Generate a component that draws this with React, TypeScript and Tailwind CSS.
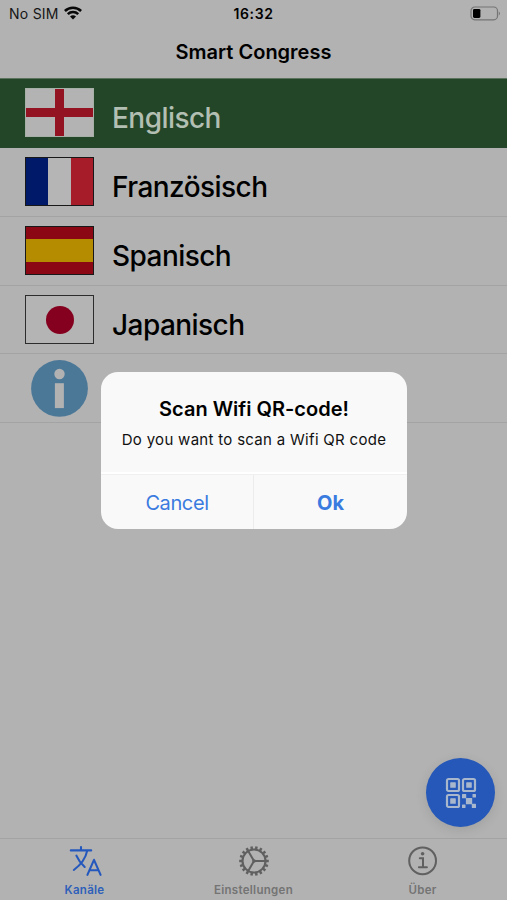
import type { ReactNode } from "react";

const channels = [
  { name: "Englisch", flag: <EnglandFlag />, active: true, height: "h-[69px]" },
  { name: "Französisch", flag: <FranceFlag />, height: "h-[69px]" },
  { name: "Spanisch", flag: <SpainFlag />, height: "h-[69px]" },
  { name: "Japanisch", flag: <JapanFlag />, height: "h-[68px]" },
];

function EnglandFlag() {
  return (
    <div className="relative h-[49px] w-[69px] border border-[#a6b0a7] bg-[#b3b3b3]">
      <div className="absolute inset-y-0 left-[29px] w-[9px] bg-[#931322]" />
      <div className="absolute inset-x-0 top-[19px] h-[9px] bg-[#931322]" />
    </div>
  );
}

function FranceFlag() {
  return (
    <div className="grid h-[49px] w-[69px] grid-cols-3 border border-[#181818]">
      <div className="bg-[#001969]" />
      <div className="bg-[#b5b5b5]" />
      <div className="bg-[#a61c29]" />
    </div>
  );
}

function SpainFlag() {
  return (
    <div className="flex h-[49px] w-[69px] flex-col border border-[#181818] bg-[#8c0714]">
      <div className="mt-[12px] h-[23px] bg-[#b58b00]" />
    </div>
  );
}

function JapanFlag() {
  return (
    <div className="flex h-[49px] w-[69px] items-center justify-center border border-[#2c2c2c] bg-[#b4b4b4]">
      <div className="h-[28px] w-[28px] rounded-full bg-[#85001f]" />
    </div>
  );
}

function WifiIcon() {
  return (
    <svg className="-mt-[2px] ml-[5px] h-[14px] w-[18px]" viewBox="0 0 18 14" fill="none" stroke="#080808" strokeWidth="2.5">
      <path d="M.9 5a11.5 11.5 0 0 1 16.2 0" />
      <path d="M3.8 8.2a7.4 7.4 0 0 1 10.4 0" />
      <path d="M9 13.6 6 10.6a4.3 4.3 0 0 1 6 0Z" fill="#080808" stroke="none" />
    </svg>
  );
}

function BatteryIcon() {
  return (
    <svg className="h-[15px] w-[31px]" viewBox="0 0 31 15" fill="none">
      <rect x="1" y="1" width="26.5" height="12.8" rx="3.8" stroke="#747474" strokeWidth="1.2" />
      <path d="M28.8 5.4v4a2.4 2.4 0 0 0 0-4Z" fill="#747474" />
      <rect x="3" y="2.9" width="7.4" height="9" rx="1.4" fill="#000" />
    </svg>
  );
}

function LanguageIcon() {
  return (
    <svg className="h-[34px] w-[34px]" viewBox="0 0 34 34" fill="none" stroke="#2558bd" strokeWidth="2.1" strokeLinecap="round" strokeLinejoin="round">
      <path d="M2.8 6.4h20.4M13 3v3.4M19.3 6.4C17.6 14.5 12 21.5 5.8 26M8.4 11.6c2 4.6 4.7 8.2 8.3 11.4" />
      <path d="m19.4 30.8 6.6-15 6.6 15M21.6 26.3h8.8" />
    </svg>
  );
}

function CogIcon() {
  return (
    <svg className="h-[32px] w-[32px]" viewBox="0 0 32 32" fill="none" stroke="#606060">
      <circle cx="16" cy="16" r="11.5" strokeWidth="2.1" />
      <g strokeWidth="2.5">
        {Array.from({ length: 18 }, (_, i) => (
          <path key={i} d="M16 4.5V1.2" transform={`rotate(${i * 20 + 10} 16 16)`} />
        ))}
      </g>
      <path d="M16 16h11.5M16 16 10.2 6M16 16l-5.8 10" strokeWidth="2" />
      <circle cx="16" cy="16" r="1.8" fill="#606060" stroke="none" />
    </svg>
  );
}

function AboutIcon() {
  return (
    <svg className="h-[32px] w-[32px]" viewBox="0 0 32 32" fill="none" stroke="#606060" strokeWidth="2">
      <circle cx="15.6" cy="15.8" r="13.4" />
      <path d="M12.8 13.3h3.2v8.8M11.9 22.3h8" strokeLinecap="round" />
      <circle cx="15.6" cy="8.7" r="1.8" fill="#606060" stroke="none" />
    </svg>
  );
}

function QrIcon() {
  return (
    <svg className="h-[32px] w-[32px]" viewBox="0 0 32 32" fill="#a9b7cd">
      <g fill="none" stroke="#a9b7cd" strokeWidth="2.2">
        <rect x="2" y="2" width="12" height="12" rx="1.5" />
        <rect x="18" y="2" width="12" height="12" rx="1.5" />
        <rect x="2" y="18" width="12" height="12" rx="1.5" />
      </g>
      <rect x="5.2" y="5.2" width="5.6" height="5.6" rx=".6" />
      <rect x="21.2" y="5.2" width="5.6" height="5.6" rx=".6" />
      <rect x="5.2" y="21.2" width="5.6" height="5.6" rx=".6" />
      <rect x="17" y="17" width="4.2" height="4.2" rx=".5" />
      <rect x="27.5" y="17" width="3.5" height="3.5" rx=".5" />
      <rect x="20.9" y="20.9" width="6.3" height="6.3" rx=".5" />
      <rect x="17" y="27.5" width="3.5" height="3.5" rx=".5" />
      <rect x="26.8" y="26.8" width="4.2" height="4.2" rx=".5" />
    </svg>
  );
}

function InfoBadge() {
  return (
    <svg className="ml-[31px] h-[58px] w-[58px]" viewBox="0 0 58 58">
      <circle cx="28.5" cy="29.4" r="28.4" fill="#4c7898" />
      <circle cx="28.5" cy="15" r="5.2" fill="#b2b2b2" />
      <path d="M23.9 24.2h9v24.9h-9Z" fill="#b2b2b2" />
    </svg>
  );
}

function Tab({ label, active, children }: { label: string; active?: boolean; children: ReactNode }) {
  return (
    <div className={`flex flex-1 flex-col items-center text-[11.5px] leading-[14px] font-semibold tracking-[0.3px] ${active ? "text-[#2e5fb9]" : "text-[#747474]"}`}>
      <div className="mt-[5px] flex h-[34px] items-center">{children}</div>
      <span className="mt-[5px]">{label}</span>
    </div>
  );
}

export default function App() {
  return (
    <div className="relative flex h-[900px] w-[507px] flex-col overflow-hidden bg-[#b2b2b2] font-['Inter',sans-serif] text-black">
      {/* Status bar */}
      <div className="grid h-[27px] grid-cols-3 items-center text-[14px] leading-none">
        <div className="flex items-center pl-[9px] text-[#161616]">
          <span className="tracking-[0.25px]">No SIM</span>
          <WifiIcon />
        </div>
        <div className="text-center font-semibold tracking-[0.6px]">16:32</div>
        <div className="flex justify-end pr-[6px]">
          <BatteryIcon />
        </div>
      </div>

      <header className="flex h-[52px] items-center justify-center border-b border-[#5a735d] pb-[2px] text-[20px] font-semibold">
        Smart Congress
      </header>

      {/* Channel list */}
      <main className="flex-1">
        {channels.map((channel) => (
          <div
            key={channel.name}
            className={`flex items-start border-b pl-[25px] pt-[9px] ${channel.height} ${
              channel.active ? "border-[#24462a] bg-[#244628] text-[#b2bfb2]" : "border-[#a3a3a3]"
            }`}
          >
            {channel.flag}
            <span className="mt-[13px] ml-[18px] text-[28px] leading-[34px] font-medium tracking-[-0.55px]">{channel.name}</span>
          </div>
        ))}
        <div className="flex h-[69px] items-start border-b border-[#a3a3a3] pt-[5px]">
          <InfoBadge />
        </div>
      </main>

      {/* Tab bar */}
      <nav className="flex h-[62px] border-t border-[#a3a3a3]">
        <Tab label="Kanäle" active>
          <LanguageIcon />
        </Tab>
        <Tab label="Einstellungen">
          <CogIcon />
        </Tab>
        <Tab label="Über">
          <AboutIcon />
        </Tab>
      </nav>

      <button aria-label="QR" className="absolute left-[426px] top-[758px] flex h-[69px] w-[69px] items-center justify-center rounded-full bg-[#2558b8] shadow-[0_3px_12px_rgba(0,0,0,0.1)]">
        <QrIcon />
      </button>

      {/* Scan dialog */}
      <div role="dialog" className="absolute left-[101px] top-[372px] flex h-[157px] w-[306px] flex-col overflow-hidden rounded-[17px] bg-[#f9f9f9] text-center">
        <div className="h-[102px] border-b-2 border-white pt-[24px]">
          <h2 className="text-[20px] leading-[26px] font-semibold">Scan Wifi QR-code!</h2>
          <p className="mt-[8px] text-[15px] leading-[20px] tracking-[0.3px] text-[#111]">Do you want to scan a Wifi QR code</p>
        </div>
        <div className="grid flex-1 grid-cols-2 border-t border-[#f0f0f0] text-[20px] text-[#3a7be0]">
          <button className="border-r border-[#ececec] pt-[2px] tracking-[-0.4px]">Cancel</button>
          <button className="pt-[2px] font-bold">Ok</button>
        </div>
      </div>
    </div>
  );
}
